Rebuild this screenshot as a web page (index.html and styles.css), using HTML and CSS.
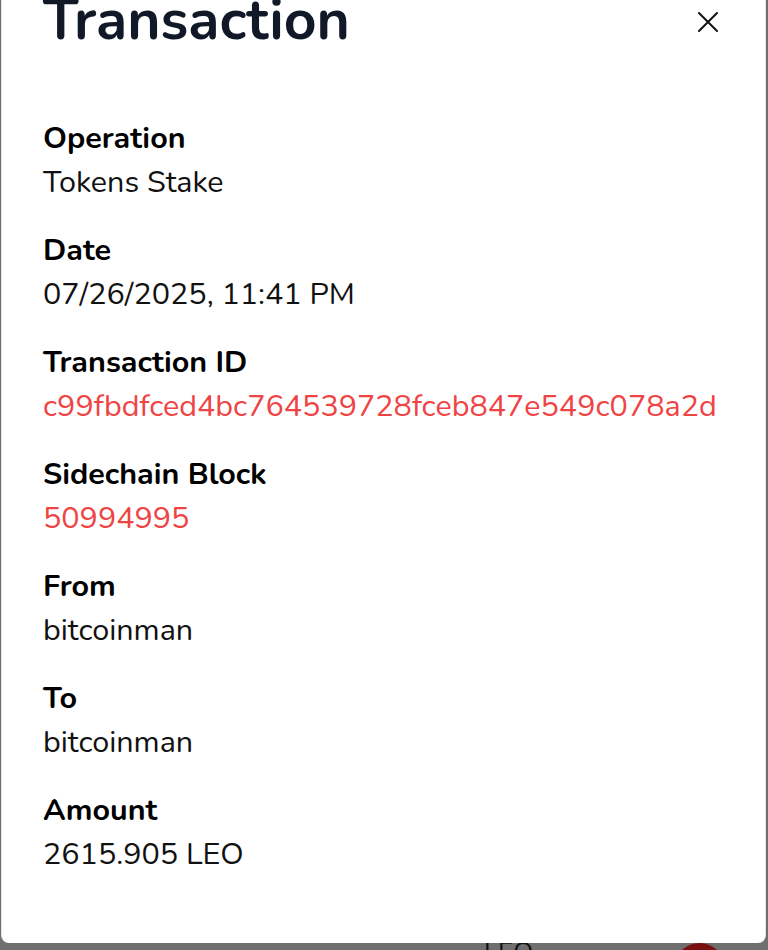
FILE: index.html
```html
<!DOCTYPE html>
<html lang="en">
<head>
<meta charset="utf-8">
<title>Transaction</title>
<link rel="stylesheet" href="styles.css">
</head>
<body>
<div class="screen">
  <section class="modal">
    <header class="head">
      <h1 class="title">Transaction</h1>
      <button class="close" aria-label="Close">
        <svg viewBox="0 0 24 24" width="24" height="24"><path d="M3 3 L21 21 M21 3 L3 21" stroke="#111" stroke-width="2" stroke-linecap="round" fill="none"/></svg>
      </button>
    </header>
    <dl class="fields">
      <div class="field"><dt>Operation</dt><dd>Tokens Stake</dd></div>
      <div class="field"><dt>Date</dt><dd>07/26/2025, 11:41 PM</dd></div>
      <div class="field"><dt>Transaction ID</dt><dd class="link">c99fbdfced4bc764539728fceb847e549c078a2d</dd></div>
      <div class="field"><dt>Sidechain Block</dt><dd class="link">50994995</dd></div>
      <div class="field"><dt>From</dt><dd>bitcoinman</dd></div>
      <div class="field"><dt>To</dt><dd>bitcoinman</dd></div>
      <div class="field"><dt>Amount</dt><dd>2615.905 LEO</dd></div>
    </dl>
  </section>
  <div class="behind">
    <span class="behind-text">LEO</span>
    <span class="behind-badge"></span>
  </div>
</div>
</body>
</html>
```
FILE: styles.css
```css
html, body {
  margin: 0;
  padding: 0;
}
body {
  background: #6f6f6f;
  font-family: "Nunito", "Lato", "Noto Sans", sans-serif;
  overflow: hidden;
  height: 950px;
}
.screen {
  display: flex;
  flex-direction: column;
  height: 950px;
  overflow: hidden;
}
.modal {
  flex: 1;
  margin: -16px 2px 0 1px;
  background: #fff;
  border-left: 1px solid #e6e6e6;
  border-right: 1px solid #e6e6e6;
  border-radius: 0 0 8px 8px;
  padding: 0 45px 0 41px;
}
.head {
  display: flex;
  justify-content: space-between;
  align-items: flex-start;
}
.title {
  margin: 0;
  font-size: 57px;
  line-height: 72px;
  font-weight: 700;
  color: #111827;
}
.close {
  margin-top: 26px;
  padding: 0;
  border: 0;
  background: none;
  width: 24px;
  height: 24px;
  display: flex;
}
.fields {
  margin: 0;
  padding-top: 60px;
  display: flex;
  flex-direction: column;
  gap: 24px;
}
.field dt {
  font-size: 30.5px;
  line-height: 44px;
  font-weight: 700;
  color: #000;
}
.field dd {
  margin: 0;
  font-size: 30.5px;
  line-height: 44px;
  color: #111;
}
.field dd.link {
  color: #ef4444;
}
.behind {
  flex: none;
  height: 7px;
  display: flex;
  align-items: flex-start;
  padding-left: 484px;
  overflow: hidden;
}
.behind-text {
  font-size: 26px;
  line-height: 20px;
  color: #111;
}
.behind-badge {
  margin-left: 141px;
  width: 51px;
  height: 51px;
  border-radius: 50%;
  background: #7a1010;
}
```
